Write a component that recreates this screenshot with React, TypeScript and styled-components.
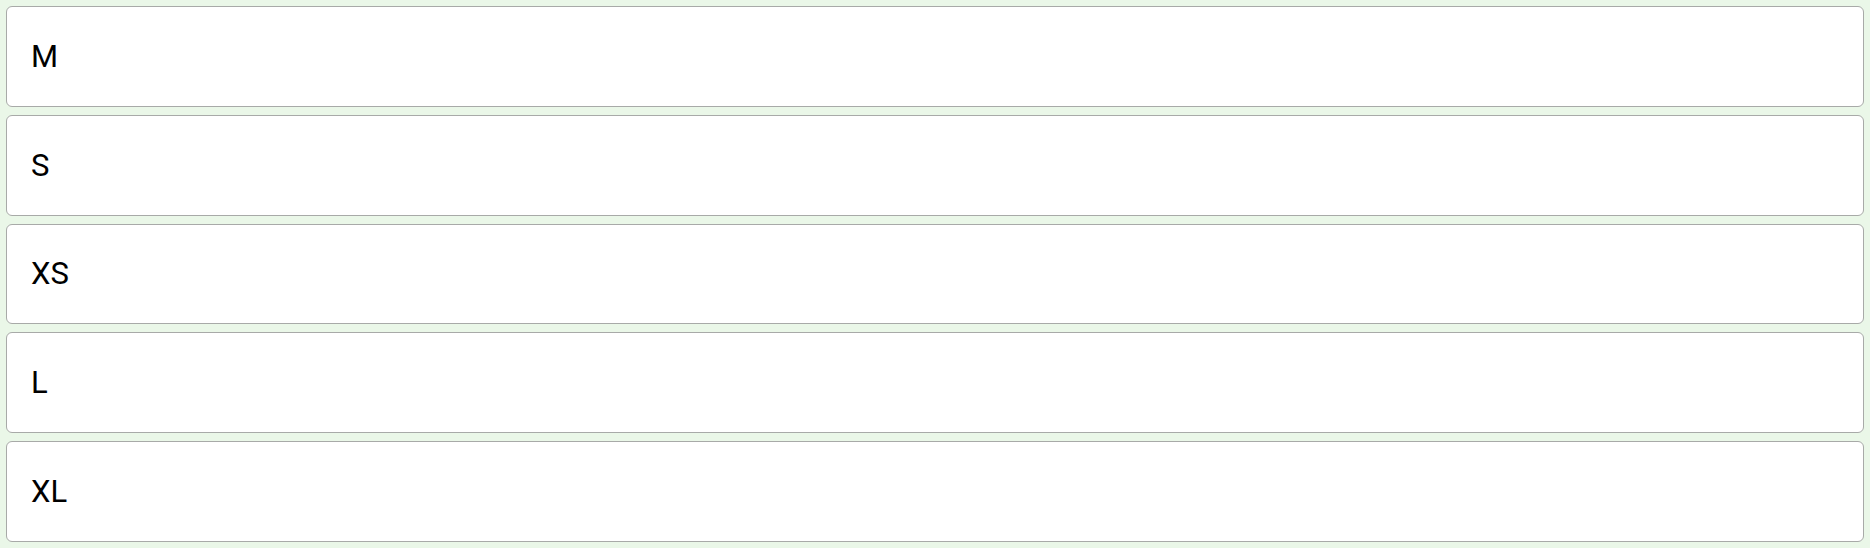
import React from "react";
import styled, { createGlobalStyle } from "styled-components";

const Global = createGlobalStyle`
  html, body { margin: 0; padding: 0; }
  body { background: #eaf7e8; font-family: Roboto, "Noto Sans", sans-serif; }
`;

const List = styled.div`
  height: 100vh;
  box-sizing: border-box;
  padding: 6px;
  display: flex;
  flex-direction: column;
  gap: 8px;
`;

const Item = styled.div`
  flex: 1;
  display: flex;
  align-items: center;
  box-sizing: border-box;
  padding: 0 24px;
  background: #ffffff;
  border: 1px solid #a8aaa8;
  border-radius: 6px;
  font-size: 31px;
  color: #000;
`;

const sizes = ["M", "S", "XS", "L", "XL"];

export default function App() {
  return (
    <>
      <Global />
      <List>
        {sizes.map((s) => (
          <Item key={s}>{s}</Item>
        ))}
      </List>
    </>
  );
}
